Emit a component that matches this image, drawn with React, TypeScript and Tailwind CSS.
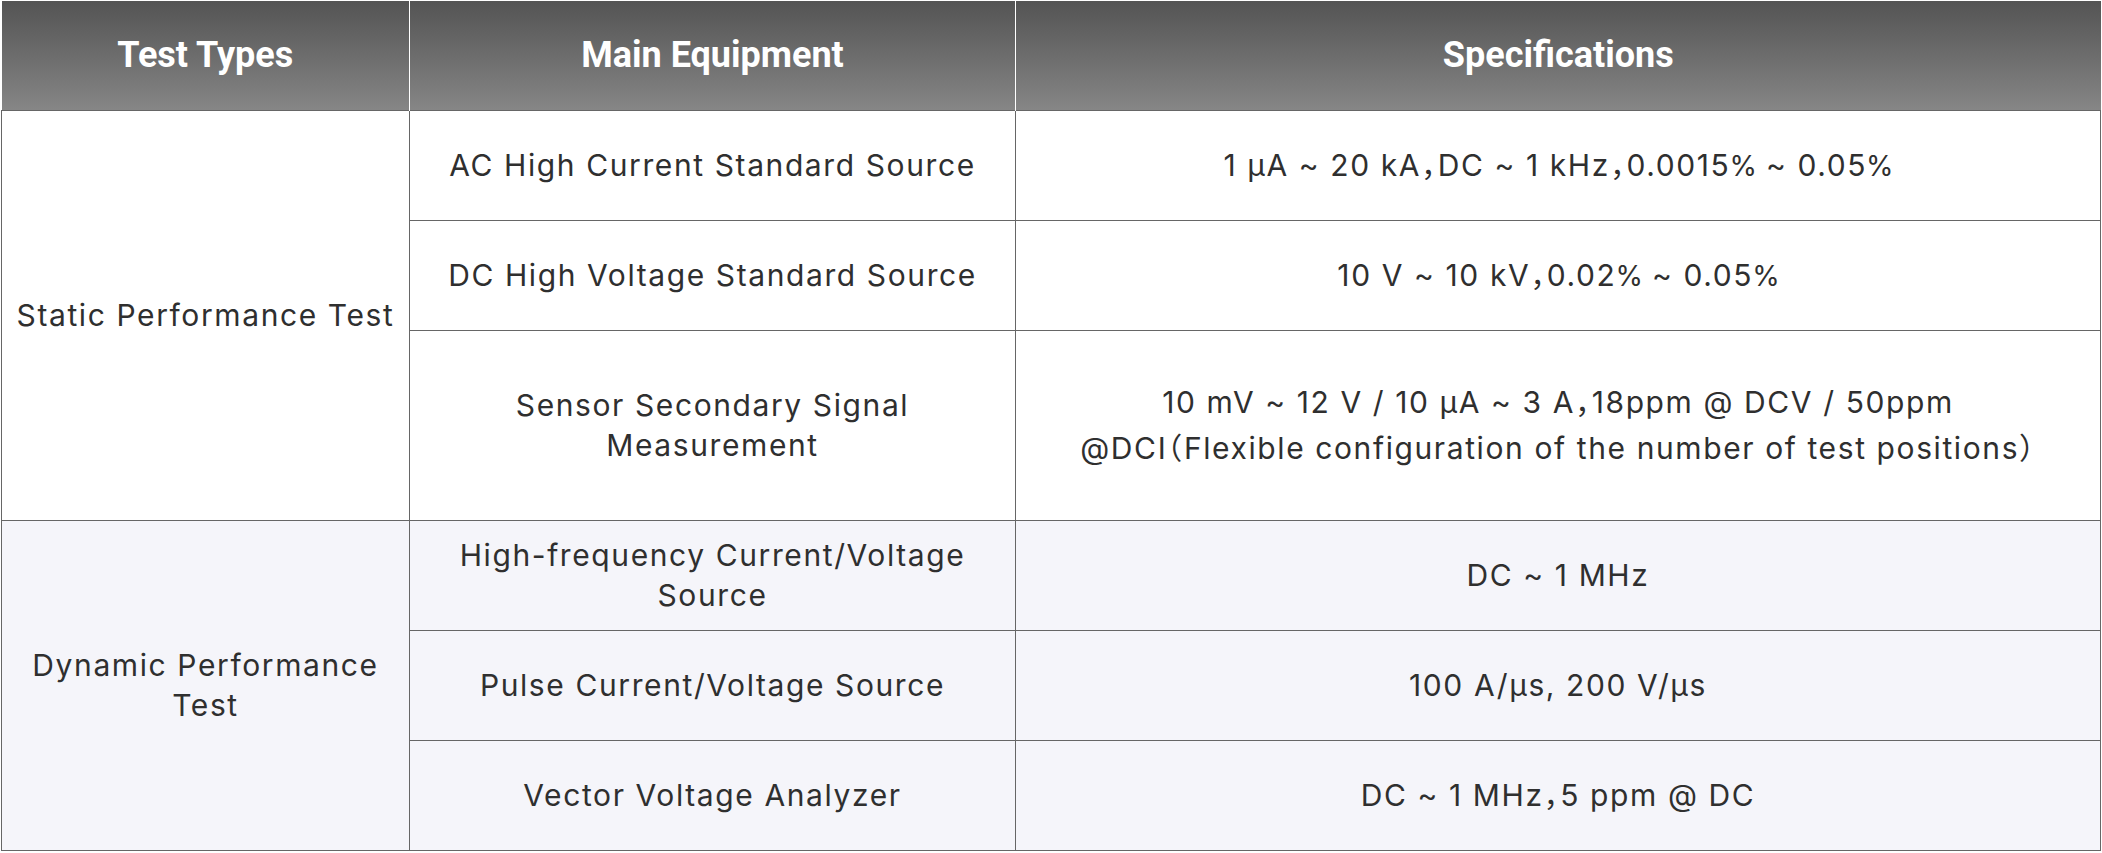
import * as React from 'react';

const ROWS = [
    { group: 'Static Performance Test', span: 3, equipment: 'AC High Current Standard Source', spec: ['1 μA ~ 20 kA，DC ~ 1 kHz，0.0015% ~ 0.05%'], tall: false },
    { equipment: 'DC High Voltage Standard Source', spec: ['10 V ~ 10 kV，0.02% ~ 0.05%'], tall: false },
    { equipment: 'Sensor Secondary Signal Measurement', spec: ['10 mV ~ 12 V / 10 μA ~ 3 A，18ppm @ DCV / 50ppm', '@DCI（Flexible configuration of the number of test positions）'], tall: true },
    { group: 'Dynamic Performance Test', span: 3, equipment: 'High-frequency Current/Voltage Source', spec: ['DC ~ 1 MHz'], tall: false },
    { equipment: 'Pulse Current/Voltage Source', spec: ['100 A/μs, 200 V/μs'], tall: false },
    { equipment: 'Vector Voltage Analyzer', spec: ['DC ~ 1 MHz，5 ppm @ DC'], tall: false },
];

// the source font has a narrower percent sign than Inter
function SpecLine({ text }: { text: string }) {
    const parts = text.split('%');
    return (
        <div>
            {parts.map((p, k) => (
                <React.Fragment key={k}>
                    {p}
                    {k < parts.length - 1 && <span className="text-[28px] tracking-[-1px] -ml-px">%</span>}
                </React.Fragment>
            ))}
        </div>
    );
}

export default function App() {
    return (
        <div className="w-[2102px] h-[853px] bg-white pl-px pt-px">
            <table className="w-[2100px] border-collapse table-fixed text-[#2f2f2f] font-['Inter','Noto_Sans_CJK_SC',sans-serif]">
                <colgroup>
                    <col className="w-[408px]" />
                    <col className="w-[606px]" />
                    <col />
                </colgroup>
                <thead>
                    <tr className="h-[109px] bg-gradient-to-b from-[#545454] to-[#868686] text-white text-[36px] font-['Roboto',sans-serif]">
                        <th className="border-r border-white font-bold">Test Types</th>
                        <th className="border-r border-white font-bold">Main Equipment</th>
                        <th className="font-bold">Specifications</th>
                    </tr>
                </thead>
                <tbody className="text-[30px] leading-[40px] tracking-[1.6px]">
                    {ROWS.map((row, i) => (
                        <tr key={i} className={`${row.tall ? 'h-[190px]' : 'h-[110px]'} ${i >= 3 ? 'bg-[#f5f5fa]' : 'bg-white'}`}>
                            {row.group && (
                                <td rowSpan={row.span} className="border border-[#666] text-center px-2">
                                    {row.group}
                                </td>
                            )}
                            <td className="border border-[#666] text-center px-6">{row.equipment}</td>
                            {/* full-width punctuation squeezed to half width */}
                            <td className="border border-[#666] text-center px-4 leading-[46px] [font-feature-settings:'halt']">
                                {row.spec.map((s, j) => (
                                    <SpecLine key={j} text={s} />
                                ))}
                            </td>
                        </tr>
                    ))}
                </tbody>
            </table>
        </div>
    );
}
